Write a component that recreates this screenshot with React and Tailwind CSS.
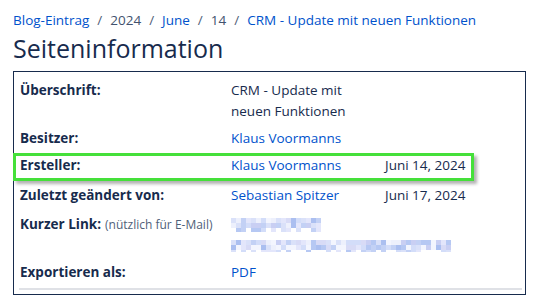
const PALETTE = ['#d3ddf9', '#c3d1f5', '#e3e6fb', '#b6c8f3', '#dae1f9', '#edf0fc', '#abbff0', '#d8dbf6', '#f3f5fe', '#c9cff3'];

function Pixelated({ width, height, seed }) {
  const cells = [];
  let s = seed;
  const size = 5;
  for (let y = 0; y < height; y += size) {
    for (let x = 0; x < width; x += size) {
      s = (s * 9301 + 49297) % 233280;
      const r = s / 233280;
      const edge = y + size >= height;
      if (edge && r > 0.5) continue;
      cells.push(
        <rect key={`${x}-${y}`} x={x} y={y} width={size} height={size} fill={PALETTE[Math.floor(r * PALETTE.length)]} />
      );
    }
  }
  return (
    <svg width={width} height={height} className="block">
      {cells}
    </svg>
  );
}

function Row({ label, note, children, date, className = '' }) {
  return (
    <div className={`flex py-[3px] ${className}`}>
      <div className="w-[212px] shrink-0 pl-px font-bold text-[#172b4d]">
        {label}
        {note && <span className="ml-1 text-[12px] font-normal text-[#505f79]">{note}</span>}
      </div>
      <div className="w-[154px] shrink-0">{children}</div>
      {date && <div className="text-[#172b4d]">{date}</div>}
    </div>
  );
}

export default function App() {
  return (
    <div className="min-h-[297px] bg-white px-[13px] pt-[10px] text-[14px] leading-[21px] text-[#172b4d]" style={{ fontFamily: '"Open Sans", "Noto Sans", sans-serif' }}>
      <nav className="flex items-center gap-[8px] text-[13.5px] text-[#505f79]">
        <a className="text-[#0052cc]">Blog-Eintrag</a>
        <span>/</span>
        <span className="text-[#42526e]">2024</span>
        <span>/</span>
        <a className="text-[#0052cc]">June</a>
        <span>/</span>
        <span className="text-[#42526e]">14</span>
        <span>/</span>
        <a className="text-[#0052cc]">CRM - Update mit neuen Funktionen</a>
      </nav>
      <h1 className="mt-[1px] text-[25px] leading-[32px] font-normal text-[#172b4d]">Seiteninformation</h1>

      <div className="mt-[7px] border border-[#172b4d] pl-[5px] pr-[3px] pt-[5px] pb-[4px] text-[13.5px]">
        <Row label="Überschrift:">
          <div>CRM - Update mit</div>
          <div>neuen Funktionen</div>
        </Row>
        <Row label="Besitzer:">
          <a className="text-[#0052cc]">Klaus Voormanns</a>
        </Row>
        <div className="relative mb-[3px]">
          <Row label="Ersteller:" date="Juni 14, 2024">
            <a className="text-[#0052cc]">Klaus Voormanns</a>
          </Row>
          <div className="pointer-events-none absolute left-[-6px] top-px h-[28px] w-[461px] border-[3px] border-[#45e03a] shadow-[3px_3px_3px_rgba(0,0,0,0.3)]" />
        </div>
        <Row label="Zuletzt geändert von:" date="Juni 17, 2024">
          <a className="text-[#0052cc]">Sebastian Spitzer</a>
        </Row>
        <Row label="Kurzer Link:" note="(nützlich für E-Mail)" className="pt-[5px]">
          <div className="flex h-[21px] items-center">
            <Pixelated width={90} height={14} seed={7} />
          </div>
          <div className="flex h-[21px] w-[230px] items-center">
            <Pixelated width={220} height={12} seed={31} />
          </div>
        </Row>
        <Row label="Exportieren als:">
          <a className="text-[#0052cc]">PDF</a>
        </Row>
        <div className="mt-[2px] h-[2px] bg-[#dfe1e6]" />
      </div>
    </div>
  );
}
